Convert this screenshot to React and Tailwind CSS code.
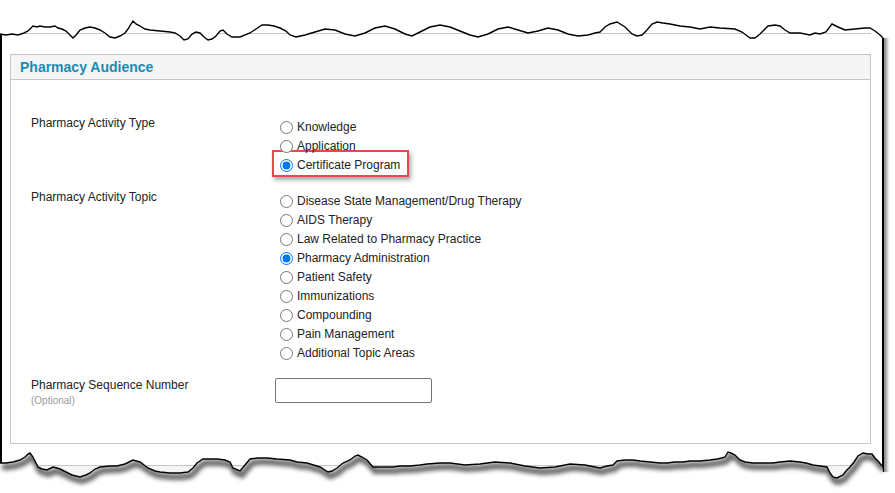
import React from "react";

// torn paper edges, traced from the screenshot
const topEdge = [
  [0, 34], [6, 35], [12, 34], [18, 35], [24, 33], [28, 31], [33, 26], [37, 27], [40, 26], [45, 27], [50, 27], [55, 26],
  [58, 28], [62, 29], [66, 31], [70, 35], [73, 38], [76, 35], [80, 30], [85, 28], [90, 27], [95, 28], [100, 30], [105, 33],
  [110, 37], [115, 38], [120, 36], [125, 33], [128, 29], [131, 24], [133, 21], [136, 24], [140, 26], [145, 29], [150, 30],
  [160, 31], [170, 32], [175, 33], [180, 36], [184, 40], [188, 39], [192, 34], [196, 32], [200, 33], [204, 37], [208, 40],
  [212, 39], [216, 36], [220, 31], [223, 30], [227, 34], [232, 37], [240, 37], [250, 33], [256, 29], [262, 25], [268, 25],
  [274, 26], [280, 28], [286, 31], [290, 35], [296, 37], [305, 35], [315, 32], [325, 29], [335, 30], [345, 34], [355, 36],
  [365, 33], [375, 28], [385, 26], [395, 29], [405, 34], [412, 36], [420, 32], [430, 27], [440, 25], [450, 27], [460, 31],
  [470, 35], [478, 37], [488, 34], [498, 29], [508, 27], [518, 30], [528, 33], [538, 31], [548, 28], [558, 30], [568, 34],
  [578, 36], [588, 35], [595, 33], [600, 32], [605, 27], [610, 24], [617, 22], [625, 27], [632, 34], [637, 36], [642, 35],
  [647, 30], [652, 24], [657, 22], [663, 23], [670, 24], [680, 26], [690, 27], [700, 29], [710, 27], [720, 28], [735, 29],
  [742, 32], [746, 35], [750, 38], [755, 38], [760, 34], [764, 30], [768, 26], [775, 25], [780, 26], [785, 30], [790, 33],
  [800, 33], [810, 35], [815, 33], [820, 34], [826, 32], [832, 24], [838, 27], [845, 30], [855, 29], [865, 28], [870, 28],
  [875, 31], [880, 35], [883, 38],
];

const bottomEdge = [
  [0, 463], [6, 463], [13, 462], [20, 460], [25, 457], [28, 454], [30, 453], [33, 457], [35, 461], [38, 467], [42, 469],
  [47, 470], [53, 467], [57, 468], [60, 469], [66, 472], [72, 475], [80, 477], [86, 475], [90, 473], [95, 469], [100, 467],
  [110, 466], [117, 466], [125, 464], [133, 460], [140, 462], [148, 468], [155, 471], [160, 472], [170, 473], [180, 473],
  [188, 472], [193, 468], [197, 463], [203, 459], [210, 459], [217, 459], [225, 460], [230, 462], [233, 468], [240, 471],
  [245, 465], [250, 459], [258, 458], [267, 458], [277, 459], [290, 460], [297, 462], [307, 463], [320, 467], [328, 472],
  [332, 471], [337, 468], [343, 463], [350, 460], [355, 456], [358, 455], [362, 457], [367, 460], [373, 467], [380, 467],
  [393, 467], [400, 466], [410, 466], [420, 465], [427, 464], [440, 463], [450, 463], [465, 465], [480, 464], [495, 462],
  [510, 463], [525, 466], [540, 468], [555, 467], [570, 464], [585, 465], [595, 467], [600, 468], [607, 466], [613, 465],
  [617, 461], [625, 460], [633, 460], [640, 461], [650, 462], [660, 463], [667, 463], [675, 462], [683, 462], [690, 461],
  [700, 461], [710, 460], [717, 459], [722, 458], [725, 457], [728, 452], [731, 453], [735, 455], [740, 460], [745, 462],
  [753, 463], [765, 463], [773, 463], [780, 462], [790, 461], [800, 462], [806, 463], [813, 465], [820, 466], [827, 467],
  [830, 473], [833, 477], [837, 478], [843, 475], [846, 471], [850, 467], [854, 462], [858, 456], [863, 453], [868, 454],
  [872, 454], [875, 458], [878, 461], [882, 466],
];

const line = (pts) => pts.map(([x, y], i) => `${i ? "L" : "M"}${x} ${y}`).join(" ");

function TornEdges() {
  const topLine = line(topEdge);
  const topFill =
    "M0 0 L895 0 L895 38 L884 38 " +
    [...topEdge].reverse().map(([x, y]) => `L${x} ${y}`).join(" ") +
    " Z";
  const bottomLine = line(bottomEdge);
  const bottomFill = bottomLine + " L883 472 L895 472 L895 493 L0 493 Z";

  return (
    <svg className="absolute inset-0 pointer-events-none" width="895" height="493" viewBox="0 0 895 493">
      <defs>
        <filter id="blur" x="-5%" y="-50%" width="110%" height="200%">
          <feGaussianBlur stdDeviation="2.2" />
        </filter>
        <clipPath id="below">
          <path d={bottomFill} />
        </clipPath>
      </defs>
      <path d={topFill} fill="#fff" />
      <path d={topLine} fill="none" stroke="#000" strokeWidth="1.4" />
      <path d={bottomFill} fill="#fff" />
      <g clipPath="url(#below)">
        <path d={bottomLine} transform="translate(2 4)" fill="none" stroke="rgba(0,0,0,0.6)" strokeWidth="6" filter="url(#blur)" />
      </g>
      <path d={bottomLine} fill="none" stroke="#000" strokeWidth="1.4" />
    </svg>
  );
}

const activityTypes = ["Knowledge", "Application", "Certificate Program"];
const topics = [
  "Disease State Management/Drug Therapy",
  "AIDS Therapy",
  "Law Related to Pharmacy Practice",
  "Pharmacy Administration",
  "Patient Safety",
  "Immunizations",
  "Compounding",
  "Pain Management",
  "Additional Topic Areas",
];

function Radio({ name, label, checked }) {
  return (
    <label className="relative z-10 flex items-center h-[19px]">
      <input type="radio" name={name} defaultChecked={checked} className="m-0 ml-[5px] mr-[4px] w-[13px] h-[13px]" />
      <span>{label}</span>
    </label>
  );
}

export default function App() {
  return (
    <div className="relative w-[895px] h-[493px] bg-white overflow-hidden font-['Liberation_Sans',Arial,sans-serif] text-[12px] text-[#222]">
      {/* Paper */}
      <div className="w-[884px] h-[493px] border-l-2 border-r-2 border-black bg-white shadow-[3px_2px_3px_rgba(0,0,0,0.45)]">
        {/* end of previous panel */}
        <div className="ml-2 mr-[11px] h-[34px] border-b border-[#c6c6c6]" />

        {/* Pharmacy Audience panel */}
        <div className="mt-5 ml-2 mr-[11px] border border-[#c6c6c6]">
          <div className="h-[25px] px-[9px] flex items-center bg-[#f5f5f5] border-b border-[#c6c6c6]">
            <h2 className="text-[14px] font-bold text-[#1a8ab3]">Pharmacy Audience</h2>
          </div>

          <div className="pt-[34px] pb-[37px] pl-5">
            <div className="flex">
              <div className="w-[244px] leading-[19px]">Pharmacy Activity Type</div>
              <div className="pt-1 leading-[19px]">
                {activityTypes.map((t) =>
                  t === "Certificate Program" ? (
                    <div key={t} className="relative">
                      <div className="absolute -left-[3px] -top-[6px] w-[137px] h-[27px] border-2 border-[#e8484c] bg-white shadow-[2px_3px_4px_rgba(0,0,0,0.35)]" />
                      <Radio name="type" label={t} checked />
                    </div>
                  ) : (
                    <Radio key={t} name="type" label={t} />
                  )
                )}
              </div>
            </div>

            <div className="flex mt-[13px]">
              <div className="w-[244px] leading-[19px]">Pharmacy Activity Topic</div>
              <div className="pt-1 leading-[19px]">
                {topics.map((t) => (
                  <Radio key={t} name="topic" label={t} checked={t === "Pharmacy Administration"} />
                ))}
              </div>
            </div>

            <div className="flex mt-[13px]">
              <div className="w-[244px]">
                <div className="leading-[19px]">Pharmacy Sequence Number</div>
                <div className="text-[10px] leading-[11px] text-[#9a9a9a]">(Optional)</div>
              </div>
              <div className="pt-[2px]">
                <input type="text" className="block w-[157px] h-[25px] border border-[#767676] rounded-[2px] bg-white" />
              </div>
            </div>
          </div>
        </div>

        {/* next panel, mostly torn away */}
        <div className="mt-[21px] ml-2 mr-[11px] h-[30px] border border-[#c6c6c6] bg-[#f5f5f5]" />
      </div>

      <TornEdges />
    </div>
  );
}
